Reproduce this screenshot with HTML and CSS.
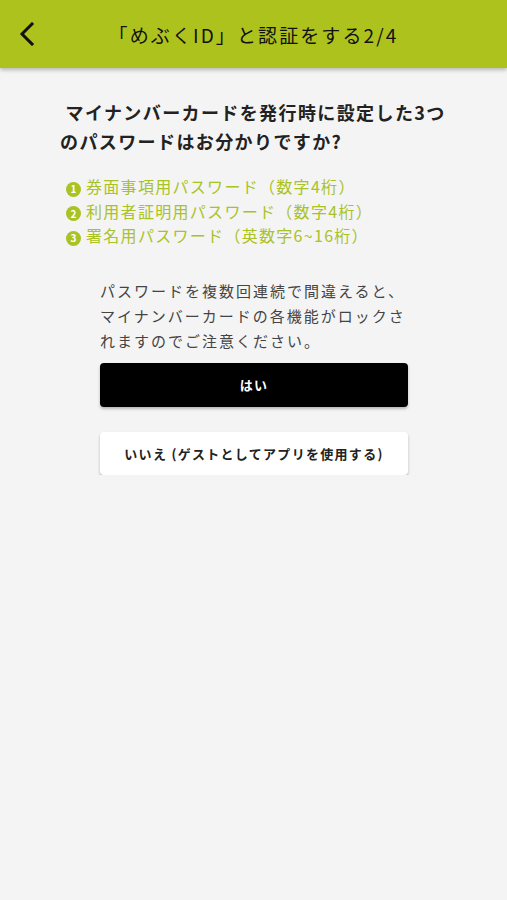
FILE: index.html
```html
<!DOCTYPE html>
<html lang="ja">
<head>
  <meta charset="UTF-8">
  <meta name="viewport" content="width=device-width, initial-scale=1.0">
  <title>「めぶくID」と認証をする2/4</title>
  <link rel="stylesheet" href="styles.css">
</head>
<body>
  <header class="appbar">
    <button class="back" aria-label="戻る">
      <svg width="18" height="24" viewBox="0 0 18 24"><path d="M14 2 L4 12 L14 22" fill="none" stroke="#111" stroke-width="3" stroke-linecap="square"/></svg>
    </button>
    <h1 class="title">「めぶくID」と認証をする2/4</h1>
  </header>

  <main class="content">
    <p class="question">&nbsp;マイナンバーカードを発行時に設定した3つのパスワードはお分かりですか?</p>

    <ul class="pw-list">
      <li><span class="num">1</span>券面事項用パスワード（数字4桁）</li>
      <li><span class="num">2</span>利用者証明用パスワード（数字4桁）</li>
      <li><span class="num">3</span>署名用パスワード（英数字6~16桁）</li>
    </ul>

    <div class="actions">
      <p class="notice">パスワードを複数回連続で間違えると、マイナンバーカードの各機能がロックされますのでご注意ください。</p>
      <button class="btn btn-yes">はい</button>
      <button class="btn btn-no">いいえ (ゲストとしてアプリを使用する)</button>
    </div>
  </main>
</body>
</html>
```

FILE: styles.css
```css
body {
  margin: 0;
  background-color: #f4f4f4;
  font-family: "Noto Sans CJK JP", "Noto Sans", sans-serif;
  color: #222;
}
.appbar {
  height: 68px;
  background-color: #adc21d;
  display: flex;
  align-items: center;
  box-shadow: 0 2px 4px rgba(0, 0, 0, 0.25);
  position: relative;
}
.back {
  background: none;
  border: none;
  padding: 0;
  margin-left: 18px;
  width: 24px;
  height: 30px;
  display: flex;
  align-items: center;
}
.title {
  flex: 1;
  margin: 0 42px 0 0;
  text-align: center;
  font-size: 19px;
  font-weight: 400;
  letter-spacing: 2.1px;
  color: #111;
}
.content {
  padding: 30px 58px 0 60px;
}
.question {
  margin: 0;
  font-size: 18px;
  font-weight: 700;
  line-height: 29px;
  letter-spacing: 1.4px;
  color: #222;
}
.pw-list {
  list-style: none;
  margin: 18px 0 0 0;
  padding: 0 0 0 6px;
  color: #a9c224;
  font-size: 16px;
  line-height: 24.5px;
  letter-spacing: 1.3px;
}
.num {
  display: inline-flex;
  align-items: center;
  justify-content: center;
  width: 15px;
  height: 15px;
  border-radius: 50%;
  background-color: #a9c224;
  color: #fff;
  font-size: 10px;
  font-weight: 700;
  line-height: 1;
  letter-spacing: 0;
  margin-right: 5px;
  vertical-align: 0;
}
.actions {
  margin: 30px 41px 0 40px;
}
.notice {
  margin: 0;
  font-size: 15px;
  line-height: 25px;
  letter-spacing: 2px;
  color: #444;
}
.btn {
  display: block;
  width: 100%;
  height: 44px;
  border: none;
  border-radius: 4px;
  font-family: inherit;
  font-size: 13px;
  font-weight: 700;
  letter-spacing: 1.3px;
  box-shadow: 0 2px 3px rgba(0, 0, 0, 0.25);
}
.btn-yes {
  margin-top: 10px;
  background-color: #000;
  color: #fff;
}
.btn-no {
  margin-top: 25px;
  height: 43px;
  background-color: #fff;
  color: #222;
}
```
